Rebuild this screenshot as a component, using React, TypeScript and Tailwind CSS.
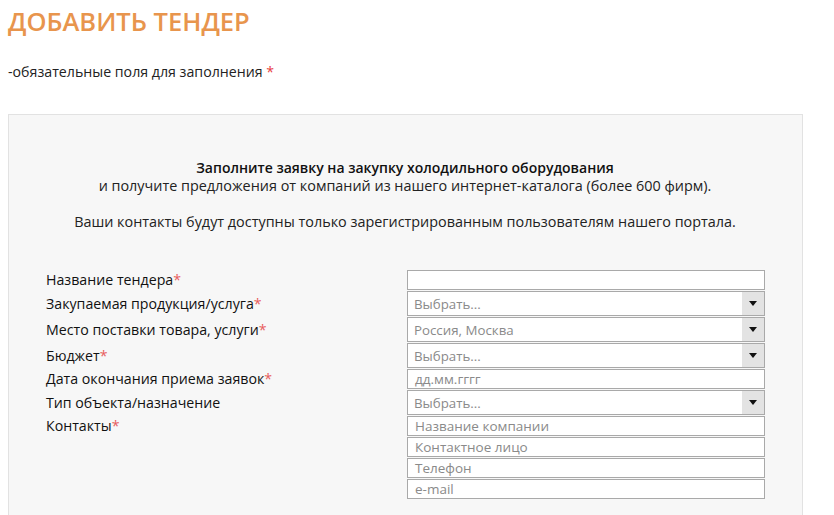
import { JSX } from 'react';

const font = { fontFamily: '"Open Sans", "Noto Sans", sans-serif' };

const Req = () => <span className="text-[#e85d5d]">*</span>;

const TextField = ({ placeholder }: { placeholder?: string }) => (
    <div className="h-[20px] border border-[#a9a9a9] bg-white flex items-center px-[7px] text-[13.5px] text-[#8a8a8a]">
        {placeholder}
    </div>
);

const SelectField = ({ value }: { value: string }) => (
    <div className="h-[25px] border border-[#a9a9a9] bg-white flex items-stretch text-[13.3px] text-[#8a8a8a]">
        <div className="flex-1 flex items-center px-[6px]">{value}</div>
        <div className="w-[22px] bg-[#e3e3e3] flex items-center justify-center">
            <svg width="8" height="5" viewBox="0 0 8 5">
                <path d="M0 0h8L4 5z" fill="#111" />
            </svg>
        </div>
    </div>
);

const rows: { label: string; req: boolean; field: JSX.Element }[] = [
    { label: 'Название тендера', req: true, field: <TextField /> },
    { label: 'Закупаемая продукция/услуга', req: true, field: <SelectField value="Выбрать..." /> },
    { label: 'Место поставки товара, услуги', req: true, field: <SelectField value="Россия, Москва" /> },
    { label: 'Бюджет', req: true, field: <SelectField value="Выбрать..." /> },
    { label: 'Дата окончания приема заявок', req: true, field: <TextField placeholder="дд.мм.гггг" /> },
    { label: 'Тип объекта/назначение', req: false, field: <SelectField value="Выбрать..." /> },
];

const App = (): JSX.Element => {
    return (
        <div className="min-h-[515px] bg-white pl-[8px] pt-[5px] text-[#111]" style={font}>
            <h1 className="text-[25.5px] leading-[32px] font-semibold text-[#e8954d]">ДОБАВИТЬ ТЕНДЕР</h1>
            <p className="mt-[25px] text-[14.2px] leading-[20px] text-[#222]">
                -обязательные поля для заполнения <span className="text-[#e8403f]">*</span>
            </p>

            {/* Form panel */}
            <div className="mt-[32px] w-[795px] border border-[#e2e2e2] bg-[#f7f7f7] pt-[44px] pb-[40px] pl-[37px]">
                <div className="w-[720px] mx-auto -translate-x-[19px] text-center text-[14.4px] leading-[18px] text-[#222]">
                    <p className="font-semibold text-[14px] text-[#111]">Заполните заявку на закупку холодильного оборудования</p>
                    <p>и получите предложения от компаний из нашего интернет-каталога (более 600 фирм).</p>
                    <p className="mt-[18px]">Ваши контакты будут доступны только зарегистрированным пользователям нашего портала.</p>
                </div>

                <div className="mt-[39px] grid grid-cols-[361px_358px] gap-y-[1px] text-[14.2px] leading-[20px]">
                    {rows.map((r) => (
                        <div key={r.label} className="contents">
                            <div className="flex items-center">
                                <span>
                                    {r.label}
                                    {r.req && <Req />}
                                </span>
                            </div>
                            {r.field}
                        </div>
                    ))}
                    <div className="leading-[20px]">
                        Контакты<Req />
                    </div>
                    <div className="flex flex-col gap-[1px]">
                        <TextField placeholder="Название компании" />
                        <TextField placeholder="Контактное лицо" />
                        <TextField placeholder="Телефон" />
                        <TextField placeholder="e-mail" />
                    </div>
                </div>
            </div>
        </div>
    );
};

export default App;
